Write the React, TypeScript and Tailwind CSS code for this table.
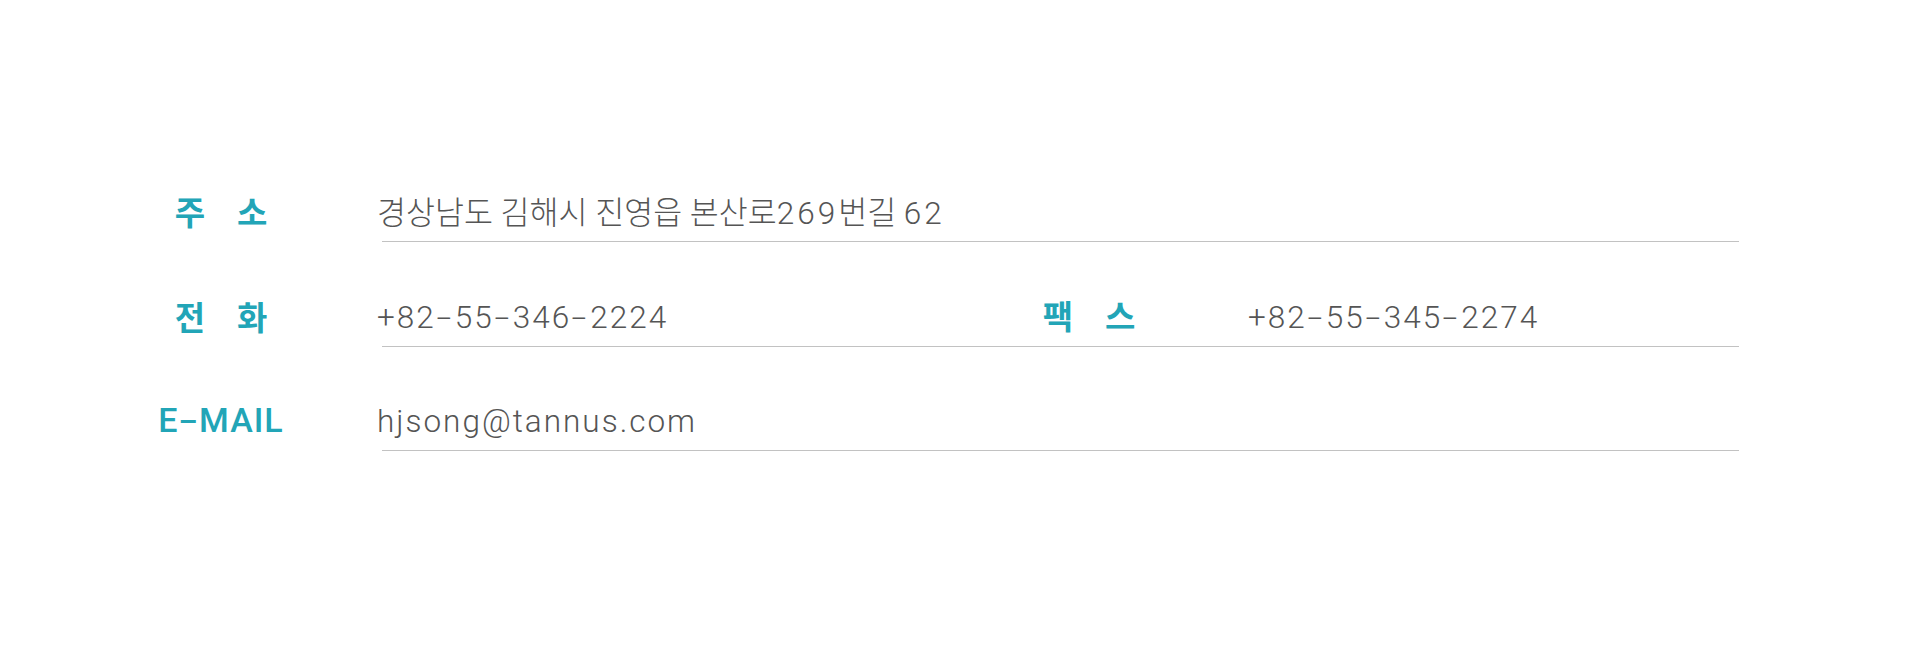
const label = 'text-[#22a5b7] font-bold text-[33px] leading-none';
const value = 'text-[#555555] font-light text-[31.5px] leading-none whitespace-nowrap';
const latin = 'tracking-[2px]';

function Label({ chars }: { chars: string[] }) {
  return (
    <div className={`w-[124px] shrink-0 flex justify-center gap-[32px] ${label}`}>
      {chars.map(c => (
        <span key={c}>{c}</span>
      ))}
    </div>
  );
}

// wide hyphen like the original font
function Dash() {
  return <span className="inline-block scale-x-[1.7] mx-[4px]">-</span>;
}

function Phone({ parts }: { parts: string[] }) {
  return (
    <>
      {parts.map((p, i) => (
        <span key={i}>
          {i > 0 && <Dash />}
          {p}
        </span>
      ))}
    </>
  );
}

export default function App() {
  return (
    <div
      className="w-full h-[658px] bg-white flex flex-col pt-[188px] pl-[159px]"
      style={{ fontFamily: 'Roboto, "Noto Sans CJK KR", "Noto Sans", sans-serif' }}
    >
      {/* 주소 */}
      <div className="flex items-end h-[54px]">
        <div className="pb-[12px]">
          <Label chars={['주', '소']} />
        </div>
        <div className="flex-1 ml-[94px] mr-[181px] flex flex-col">
          <div className={`pb-[12px] ${value}`}>
            경상남도 김해시 진영읍 본산로<span className="tracking-[3px]">269</span>번길{' '}
            <span className="tracking-[3px]">62</span>
          </div>
          <div className="ml-[5px] h-px bg-[#c2c2c2]" />
        </div>
      </div>

      {/* 전화 / 팩스 */}
      <div className="flex items-end h-[54px] mt-[51px]">
        <div className="pb-[12px]">
          <Label chars={['전', '화']} />
        </div>
        <div className="flex-1 ml-[94px] mr-[181px] flex flex-col">
          <div className="flex items-end pb-[13px]">
            <div className={`w-[650px] ${value} ${latin}`}>
              +<Phone parts={['82', '55', '346', '2224']} />
            </div>
            <div className="-mb-px">
              <Label chars={['팩', '스']} />
            </div>
            <div className={`ml-[97px] ${value} ${latin}`}>
              +<Phone parts={['82', '55', '345', '2274']} />
            </div>
          </div>
          <div className="ml-[5px] h-px bg-[#c2c2c2]" />
        </div>
      </div>

      {/* 이메일 */}
      <div className="flex items-end h-[54px] mt-[50px]">
        <div className="w-[124px] shrink-0 flex justify-center whitespace-nowrap pb-[14px] text-[#22a5b7] font-medium text-[34px] leading-none tracking-[1px]">
          E<Dash />MAIL
        </div>
        <div className="flex-1 ml-[94px] mr-[181px] flex flex-col">
          <div className={`pb-[13px] ${value} tracking-[2px]`}>hjsong@tannus.com</div>
          <div className="ml-[5px] h-px bg-[#c2c2c2]" />
        </div>
      </div>
    </div>
  );
}
